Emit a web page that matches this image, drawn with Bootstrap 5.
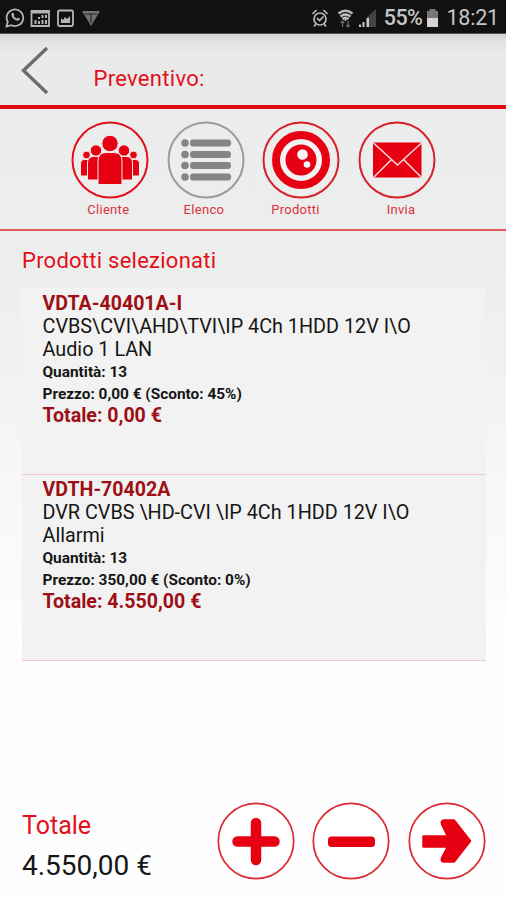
<!DOCTYPE html>
<html lang="it">
<head>
<meta charset="utf-8">
<meta name="viewport" content="width=device-width, initial-scale=1">
<title>Preventivo</title>
<link href="https://cdn.jsdelivr.net/npm/bootstrap@5.3.0/dist/css/bootstrap.min.css" rel="stylesheet">
<style>
  body { font-family: Roboto, sans-serif; color: #161616; background: #fff; }
  .screen { height: 900px; background: linear-gradient(#ebebeb 34px, #eceeee 260px, #f0f0f0 350px, #f8f8f8 500px, #fdfdfd 640px, #fefefe 900px); }
  .status { height: 34px; background: #111; color: #c6c6c6; padding: 2px 7px 0 5px; border-bottom: 1px solid #555; }
  .status-num { font-size: 21.5px; line-height: 32px; }
  .status-pct { letter-spacing: -.5px; font-weight: 500; }
  .clock { margin-left: 7px; letter-spacing: -.2px; }
  .top-bar { height: 75px; border-bottom: 4px solid #e00a14; background: linear-gradient(#d2d2d2, #e3e3e3 8px, #eaeaea 22px); padding-left: 20px; }
  .red { color: #e3101a; }
  .dark-red { color: #9c0f14; }
  .page-title { font-size: 22px; line-height: 26px; margin-left: 43.5px; letter-spacing: .3px; padding-top: 18px; }
  .tools { height: 122px; padding: 12px 0 0 62.5px; border-bottom: 2px solid #dc5a5e; }
  .tool { width: 95.6px; }
  .tool-label { font-size: 13px; line-height: 16px; color: #d9323a; margin-top: 2.5px; letter-spacing: .3px; }
  .selected { padding: 0 20px 0 22px; }
  .section-title { font-size: 22px; line-height: 28px; margin: 16px 0 13px; letter-spacing: .25px; }
  .product { height: 186px; padding: 4px 20px 0 20.5px; background: #f2f2f2; border-bottom: 1px solid #f2c6ca; }
  .code, .sum { font-size: 19.6px; line-height: 22px; }
  .desc { font-size: 19.8px; line-height: 23px; width: 400px; }
  .info { font-size: 15.4px; line-height: 22px; }
  .product:first-of-type { height: 187px; padding-top: 5px; }
  .total-label { font-size: 25px; line-height: 30px; }
  .total-value { font-size: 28px; line-height: 32px; margin-top: 9px; }
  .footer-row { padding: 0 20px 18px 22px; }
  .actions { gap: 17.6px; padding-bottom: 2px; }
  svg { display: block; flex: none; }
</style>
</head>
<body>
<main class="screen d-flex flex-column">
  <div class="status d-flex align-items-center justify-content-between">
    <div class="d-flex align-items-center">
      <svg width="100" height="24" viewBox="0 0 100 24" fill="none" stroke="#b5b5b5" stroke-width="1.8">
        <path d="M1.5 20.5l1.2-4.7a8.3 8.3 0 1 1 3.6 3.4z"/>
        <path d="M6.500 8c1-2 2-1.500 2.800.8-.9 1-.6 1.700 1.300 3.200 1 .8 1.700.7 2.500-.3 2.200.7 2.300 1.400.8 2.600-3 1.600-8-3-7.400-6.300z" fill="#b5b5b5" stroke="none"/>
        <path d="M26.500 5h17.500v15h-17.500z"/><path d="M27 6.500h17" stroke-width="2"/>
        <path d="M30.500 14v4M34 11v2m0 2v3M37.500 9v3m0 2v4M41 9v3m0 2v4" stroke-width="2"/>
        <rect x="53" y="4.500" width="15" height="15.500" rx="1.500"/>
        <path d="M56 17v-5l2 2 2-3 2 2 3-3v7z" fill="#b5b5b5" stroke="none"/>
        <path d="M77 5h18l-9 15z" fill="#737373" stroke="none"/><path d="M80 8h12M86 8v9" stroke="#222" stroke-width="1.200"/>
      </svg>
    </div>
    <div class="d-flex align-items-center">
      <svg width="66" height="24" viewBox="0 0 66 24" fill="none" stroke="#bdbdbd" stroke-width="1.700">
        <circle cx="10" cy="13" r="6"/><path d="M7 12l2.500 2.500 4-4M2.500 8l4-4M17.500 8l-4-4M6 18l-2 2.500M14 18l2 2.500"/>
        <path d="M28.500 7.500q7-5.500 14 0M30.500 10.500q5-4 10 0M32.500 13q3-2.500 6 0" stroke-width="2.300"/><path d="M35.500 12v3"/>
        <path d="M32.500 15v6M30.800 17l1.700-2 1.700 2M38 15v6M36.300 19l1.700 2 1.700-2" stroke="#666" stroke-width="1.300"/>
        <path d="M57 11l9-8v18h-9z" fill="#444" stroke="none"/><path d="M49 18.500h2V21h-2zM52.500 16h2v5h-2zM56.500 12h2.500v9h-2.500z" fill="#c8c8c8" stroke="none"/>
      </svg>
      <span class="status-num status-pct ms-2">55%</span>
      <svg class="ms-1" width="13" height="20" viewBox="0 0 13 20"><path d="M3.500 1h6v2H12v8H1V3h2.500z" fill="#777"/><path d="M1 10h11v9H1z" fill="#d4d4d4"/></svg>
      <span class="status-num clock">18:21</span>
    </div>
  </div>

  <header class="top-bar d-flex align-items-center">
    <svg width="30" height="72" viewBox="0 0 30 72"><path d="M27 14L3.500 36.500 27 59" fill="none" stroke="#6c6c6c" stroke-width="3.400"/></svg>
    <h1 class="page-title red fw-normal mb-0">Preventivo:</h1>
  </header>

  <nav class="tools d-flex">
    <a class="tool d-flex flex-column align-items-center text-decoration-none" href="#">
      <svg width="78" height="78" viewBox="0 0 78 78"><circle cx="39" cy="39" r="37.500" fill="none" stroke="#e3101a" stroke-width="2"/>
        <g fill="#e60012" stroke="#eee" stroke-width="1">
          <circle cx="15.500" cy="34" r="3.900"/><circle cx="62.500" cy="34" r="3.900"/>
          <path d="M9.500 55V43q0-4.500 4-4.500h6v16.500zM68.500 55V43q0-4.500-4-4.500h-6v16.500z"/>
          <circle cx="25" cy="29.500" r="5.700"/><circle cx="53" cy="29.500" r="5.700"/>
          <path d="M16.500 59V42q0-6.500 6-6.500h10v23.500zM61.500 59V42q0-6.500-6-6.500h-10v23.500z"/>
          <path d="M27 63.500V40q0-8.500 8.500-8.500h7q8.500 0 8.500 8.500v23.500z"/>
          <circle cx="39" cy="22.500" r="8.200"/>
        </g></svg>
      <span class="tool-label pe-1">Cliente</span>
    </a>
    <a class="tool d-flex flex-column align-items-center text-decoration-none" href="#">
      <svg width="78" height="78" viewBox="0 0 78 78"><circle cx="39" cy="39" r="37.500" fill="none" stroke="#9b9b9b" stroke-width="2"/>
        <g fill="#858585"><circle cx="18" cy="22" r="3.800"/><circle cx="18" cy="33.500" r="3.800"/><circle cx="18" cy="44.500" r="3.800"/><circle cx="18" cy="56" r="3.800"/>
        <rect x="23" y="18.500" width="41" height="7" rx="3"/><rect x="23" y="30" width="41" height="7" rx="3"/><rect x="23" y="41" width="41" height="7" rx="3"/><rect x="23" y="52.500" width="41" height="7" rx="3"/></g></svg>
      <span class="tool-label pe-1">Elenco</span>
    </a>
    <a class="tool d-flex flex-column align-items-center text-decoration-none" href="#">
      <svg width="78" height="78" viewBox="0 0 78 78"><circle cx="39" cy="39" r="37.500" fill="none" stroke="#d8202a" stroke-width="2"/>
        <circle cx="39" cy="39" r="25" fill="#f4f4f4" stroke="#e60012" stroke-width="8"/><circle cx="39" cy="39" r="15.500" fill="#e60012"/>
        <circle cx="40.500" cy="33.500" r="5.300" fill="#f6f6f6"/><circle cx="45" cy="43.500" r="3.300" fill="#f6f6f6"/></svg>
      <span class="tool-label pe-2 me-1">Prodotti</span>
    </a>
    <a class="tool d-flex flex-column align-items-center text-decoration-none" href="#">
      <svg width="78" height="78" viewBox="0 0 78 78"><circle cx="39" cy="39" r="37.500" fill="none" stroke="#d8202a" stroke-width="2"/>
        <path d="M15 21.500h48.500v35H15z" fill="#e60012"/><path d="M15.500 22l24 22 24-22M15.500 56.500L33 39M63.500 56.500L46 39" fill="none" stroke="#f3dcdc" stroke-width="1.500"/></svg>
      <span class="tool-label ps-2">Invia</span>
    </a>
  </nav>

  <section class="selected">
    <h2 class="section-title red fw-normal">Prodotti selezionati</h2>
    <article class="product">
      <div class="code dark-red fw-bold">VDTA-40401A-I</div>
      <div class="desc">CVBS\CVI\AHD\TVI\IP 4Ch 1HDD 12V I\O<br>Audio 1 LAN</div>
      <div class="info fw-bold">Quantità: 13<br>Prezzo: 0,00 € (Sconto: 45%)</div>
      <div class="sum dark-red fw-bold">Totale: 0,00 €</div>
    </article>
    <article class="product">
      <div class="code dark-red fw-bold">VDTH-70402A</div>
      <div class="desc">DVR CVBS \HD-CVI \IP 4Ch 1HDD 12V I\O<br>Allarmi</div>
      <div class="info fw-bold">Quantità: 13<br>Prezzo: 350,00 € (Sconto: 0%)</div>
      <div class="sum dark-red fw-bold">Totale: 4.550,00 €</div>
    </article>
  </section>

  <footer class="footer-row d-flex justify-content-between align-items-end mt-auto">
    <div>
      <div class="total-label red">Totale</div>
      <div class="total-value">4.550,00 €</div>
    </div>
    <div class="actions d-flex">
      <svg width="78" height="78" viewBox="0 0 78 78"><circle cx="39" cy="39" r="37.700" fill="#fff" stroke="#dc2a34" stroke-width="1.700"/><path d="M39 21v37M20.500 39.500h37" stroke="#e60012" stroke-width="10.500" stroke-linecap="round"/></svg>
      <svg width="78" height="78" viewBox="0 0 78 78"><circle cx="39" cy="39" r="37.700" fill="#fff" stroke="#dc2a34" stroke-width="1.700"/><rect x="16" y="34.500" width="47" height="10.500" rx="3.500" fill="#e60012"/></svg>
      <svg width="78" height="78" viewBox="0 0 78 78"><circle cx="39" cy="39" r="37.700" fill="#fff" stroke="#dc2a34" stroke-width="1.700"/><path d="M15.500 34.500H40L34 22q-1-3.500 2-3.500H46L62 39 46 59.500H36q-3 0-2-3.500L40 44.500H15.500z" fill="#e60012" stroke="#e60012" stroke-width="2.500" stroke-linejoin="round"/></svg>
    </div>
  </footer>
</main>
<script src="https://cdn.jsdelivr.net/npm/bootstrap@5.3.0/dist/js/bootstrap.bundle.min.js"></script>
</body>
</html>
